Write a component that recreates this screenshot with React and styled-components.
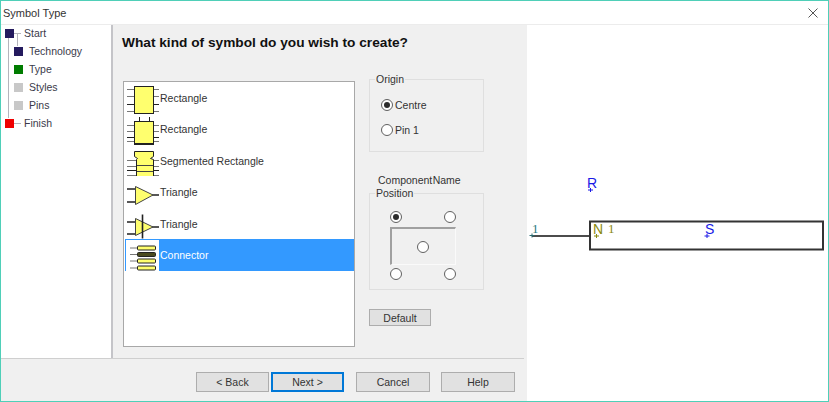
import React from "react";
import styled, { createGlobalStyle } from "styled-components";

const GlobalStyle = createGlobalStyle`
html, body {
  margin: 0;
  padding: 0;
  background: #fff;
}
`;

const Window = styled.div`
width: 829px;
height: 402px;
box-sizing: border-box;
border: 1px solid #4fcfb8;
display: flex;
flex-direction: column;
overflow: hidden;
background: #fff;
font-family: "Liberation Sans", Arial, sans-serif;
font-size: 11px;
color: #222;
`;

const TitleBar = styled.div`
height: 23px;
flex: none;
display: flex;
align-items: center;
justify-content: space-between;
padding: 0 10px 0 2px;
border-bottom: 1px solid #ececec;
font-size: 11px;
color: #333;
`;

const Body = styled.div`
flex: 1;
display: flex;
min-height: 0;
`;

const Wizard = styled.div`
width: 526px;
flex: none;
display: flex;
flex-direction: column;
background: #f0f0f0;
`;

const WizardMain = styled.div`
flex: 1;
display: flex;
min-height: 0;
`;

const StepList = styled.div`
width: 110px;
flex: none;
position: relative;
background: #fff;
border-right: 2px solid #c4c4c8;
`;

const StepTrack = styled.div`
margin-top: -1px;
`;

const StepRail = styled.div`
position: absolute;
left: 7px;
top: 13px;
height: 80px;
border-left: 1px solid #b4b4bc;
`;

const StepBranch = styled.div`
position: absolute;
left: 16px;
top: 8px;
height: 13px;
border-left: 1px solid #b4b4bc;
`;

const Step = styled.div`
height: 18px;
display: flex;
align-items: center;
gap: 5px;
padding-left: ${(p) => (p.$nested ? "13px" : "4px")};
position: relative;
color: #3a3a4a;
font-size: 10.5px;
${(p) =>
  !p.$nested &&
  `&::after {
    content: "";
    position: absolute;
    left: 13px;
    top: 9px;
    width: 7px;
    border-top: 1px solid #b4b4bc;
  }`}
`;

const StepMark = styled.span`
width: 9px;
height: 9px;
flex: none;
background: ${(p) => p.$color};
margin-right: ${(p) => (p.$nested ? "1px" : "5px")};
position: relative;
z-index: 1;
`;

const Content = styled.div`
flex: 1;
padding: 9px 0 0 10px;
display: flex;
flex-direction: column;
min-width: 0;
`;

const Heading = styled.h1`
margin: 0 0 30px -1px;
font-size: 13.7px;
line-height: 17px;
font-weight: bold;
color: #111;
`;

const Columns = styled.div`
display: flex;
gap: 14px;
`;

const SymbolList = styled.div`
width: 232px;
height: 266px;
box-sizing: border-box;
border: 1px solid #a8a8a8;
background: #fff;
padding: 0.3px 0 0 1px;
`;

const SymbolRow = styled.div`
height: 31.4px;
display: flex;
align-items: center;
background: ${(p) => (p.$selected ? "#3399ff" : "transparent")};
color: ${(p) => (p.$selected ? "#fff" : "#333")};
font-size: 10.5px;
`;

const SymbolIcon = styled.span`
width: 34px;
height: 100%;
margin-right: 1px;
flex: none;
display: block;
background: #fff;
box-shadow: ${(p) => (p.$selected ? "inset 1px 1px 0 #3399ff" : "none")};
`;

const Options = styled.div`
width: 115px;
display: flex;
flex-direction: column;
margin-top: -2px;
`;

const GroupBox = styled.div`
box-sizing: border-box;
border: 1px solid #dfdfdf;
position: relative;
height: ${(p) => p.$height}px;
margin-top: ${(p) => p.$top || 0}px;
`;

const GroupTitle = styled.span`
position: absolute;
left: 5px;
top: -7px;
background: #f0f0f0;
padding: 0 1px;
font-size: 10.5px;
line-height: 12px;
color: #333;
`;

const OriginOptions = styled.div`
display: flex;
flex-direction: column;
gap: 13px;
padding: 19px 0 0 11px;
`;

const RadioRow = styled.label`
display: flex;
align-items: center;
gap: 2px;
height: 12px;
font-size: 10.5px;
color: #333;
`;

const Radio = styled.span`
width: 12px;
height: 12px;
box-sizing: border-box;
flex: none;
display: flex;
align-items: center;
justify-content: center;
border: 1px solid #606060;
border-radius: 50%;
background: #fff;
&::after {
  content: "";
  width: 6px;
  height: 6px;
  border-radius: 50%;
  background: ${(p) => (p.$checked ? "#2c2c2c" : "transparent")};
}
`;

const NameCaption = styled.div`
margin: 22px 0 0 9px;
height: 12px;
line-height: 12px;
font-size: 10.5px;
word-spacing: -2.5px;
color: #333;
`;

const PositionGrid = styled.div`
display: grid;
grid-template-columns: repeat(3, 27px);
grid-template-rows: 24px 36px 18px;
margin: 11px 0 0 12px;
justify-items: center;
align-items: center;
position: relative;
`;

// the small frame the five name positions sit around
const PositionBox = styled.div`
position: absolute;
left: 20px;
top: 33px;
width: 66px;
height: 38px;
box-sizing: border-box;
border-style: solid;
border-width: 2px 1px 1px 2px;
border-color: #a0a0a0 #fafafa #fafafa #a0a0a0;
`;

const PositionCell = styled.span`
grid-column: ${(p) => p.$col};
grid-row: ${(p) => p.$row};
display: flex;
`;

const WizardButton = styled.button`
width: ${(p) => p.$width || 74}px;
height: 20px;
padding: 0;
margin-right: ${(p) => p.$after || 0}px;
box-sizing: border-box;
background: #e1e1e1;
border: ${(p) => (p.$primary ? "2px solid #0078d7" : "1px solid #adadad")};
font-family: inherit;
font-size: 10.5px;
color: #333;
`;

const DefaultButton = styled(WizardButton)`
width: 62px;
height: 17px;
margin-top: 19px;
`;

const Footer = styled.div`
height: 43px;
flex: none;
margin-right: 3px;
border-top: 1px solid #cfcfcf;
display: flex;
justify-content: flex-end;
align-items: flex-start;
padding: 13px 9px 0 0;
box-sizing: border-box;
`;

const Canvas = styled.div`
flex: 1;
position: relative;
background: #fff;
`;

const CanvasDrawing = styled.svg`
position: absolute;
left: 0;
top: 0;
`;

const PinLabel = styled.span`
position: absolute;
left: ${(p) => p.$x}px;
top: ${(p) => p.$y}px;
font-family: ${(p) => (p.$serif ? '"Liberation Serif", serif' : '"Liberation Sans", Arial, sans-serif')};
font-size: ${(p) => p.$size || 14}px;
line-height: 14px;
color: ${(p) => p.$color};
`;

const CHIP_YELLOW = "#ffff6e";

// lead lines either side of a chip body
const Leads = ({ rows, x1 = 2, x2 = 34 }) =>
  rows.map((y, i) => (
    <line key={i} x1={x1} y1={y} x2={x2} y2={y} stroke={i === 2 ? "#222" : "#777"} strokeWidth="1" />
  ));

const RectIcon = () => (
  <svg width="34" height="32" viewBox="0 0 34 32">
    <Leads rows={[7.5, 14.5, 22.5, 29.5]} />
    <rect x="9.5" y="4.5" width="19" height="27" fill={CHIP_YELLOW} stroke="#222" />
  </svg>
);

const PinnedRectIcon = () => (
  <svg width="34" height="32" viewBox="0 0 34 32">
    <path d="M14.500 3v5M24.500 3v5" stroke="#222" />
    <Leads rows={[11.5, 17.5, 23.5, 27.5]} />
    <rect x="9.5" y="7.5" width="19" height="22" fill={CHIP_YELLOW} stroke="#222" />
    <path d="M9 30.500h20" stroke="#222" strokeWidth="1.500" />
  </svg>
);

const SegmentIcon = () => (
  <svg width="34" height="32" viewBox="0 0 34 32">
    <Leads rows={[15.5, 21.5, 25.5, 30.5]} />
    <path d="M9.500 6.500h19v5l-3 2 3 1v17.500h-17v-17.500l1-1-3-2z" fill={CHIP_YELLOW} stroke="#222" />
    <path d="M12 20.500h16M12 26.500h16" stroke="#444" />
  </svg>
);

const TriangleIcon = () => (
  <svg width="34" height="32" viewBox="0 0 34 32">
    <path d="M2 13h8M2 26h8M27 19h7" stroke="#222" strokeWidth="1.600" />
    <path d="M10.500 10.500v18l17.500-9.500z" fill={CHIP_YELLOW} stroke="#444" />
  </svg>
);

const GatedTriangleIcon = () => (
  <svg width="34" height="32" viewBox="0 0 34 32">
    <path d="M2 14h8M2 26h8M27 19h7" stroke="#222" strokeWidth="1.600" />
    <path d="M10.500 10.500v17l17.500-8.500z" fill={CHIP_YELLOW} stroke="#444" />
    <path d="M17.500 6.500v24" stroke="#222" strokeWidth="1.600" />
  </svg>
);

const ConnectorIcon = () => (
  <svg width="34" height="32" viewBox="0 0 34 32">
    <path d="M5 9h7M5 15.500h7M5 22h7M5 29h7" stroke="#777" />
    {[9, 15.5, 22, 29].map((y, i) => (
      <rect key={y} x="12.5" y={y - 2} width="18" height="4" rx="1" fill={i === 1 ? "#4a4a20" : CHIP_YELLOW} stroke="#222" />
    ))}
  </svg>
);

// crosshair the editor draws at each text anchor
const Anchor = ({ x, y, color }) => (
  <path d={`M${x - 2.5} ${y}h5M${x} ${y - 2}v4`} stroke={color} fill="none" />
);

const steps = [
  { label: "Start", color: "#241a5e" },
  { label: "Technology", color: "#241a5e", nested: true },
  { label: "Type", color: "#007c00", nested: true },
  { label: "Styles", color: "#c8c8c8", nested: true },
  { label: "Pins", color: "#c8c8c8", nested: true },
  { label: "Finish", color: "#f00000" },
];

const symbols = [
  { label: "Rectangle", icon: <RectIcon /> },
  { label: "Rectangle", icon: <PinnedRectIcon /> },
  { label: "Segmented Rectangle", icon: <SegmentIcon /> },
  { label: "Triangle", icon: <TriangleIcon /> },
  { label: "Triangle", icon: <GatedTriangleIcon /> },
  { label: "Connector", icon: <ConnectorIcon />, selected: true },
];

const App = () => {
  return (
    <>
      <GlobalStyle />
      <Window>
        <TitleBar>
          <span>Symbol Type</span>
          <svg width="10" height="10" viewBox="0 0 10 10">
            <path d="M0.500 0.500l9 9M9.500 0.500l-9 9" stroke="#555" strokeWidth="1" />
          </svg>
        </TitleBar>
        <Body>
          <Wizard>
            <WizardMain>
              <StepList>
                <StepRail />
                <StepBranch />
                <StepTrack>
                  {steps.map((s) => (
                    <Step key={s.label} $nested={s.nested}>
                      <StepMark $color={s.color} $nested={s.nested} />
                      {s.label}
                    </Step>
                  ))}
                </StepTrack>
              </StepList>
              <Content>
                <Heading>What kind of symbol do you wish to create?</Heading>
                <Columns>
                  <SymbolList>
                    {symbols.map((s, i) => (
                      <SymbolRow key={i} $selected={s.selected}>
                        <SymbolIcon $selected={s.selected}>{s.icon}</SymbolIcon>
                        {s.label}
                      </SymbolRow>
                    ))}
                  </SymbolList>
                  <Options>
                    <GroupBox $height={73}>
                      <GroupTitle>Origin</GroupTitle>
                      <OriginOptions>
                        <RadioRow>
                          <Radio $checked />
                          Centre
                        </RadioRow>
                        <RadioRow>
                          <Radio />
                          Pin 1
                        </RadioRow>
                      </OriginOptions>
                    </GroupBox>
                    <NameCaption>Component Name</NameCaption>
                    <GroupBox $height={97} $top={7}>
                      <GroupTitle>Position</GroupTitle>
                      <PositionBox />
                      <PositionGrid>
                        <PositionCell $col={1} $row={1}><Radio $checked /></PositionCell>
                        <PositionCell $col={3} $row={1}><Radio /></PositionCell>
                        <PositionCell $col={2} $row={2}><Radio /></PositionCell>
                        <PositionCell $col={1} $row={3}><Radio /></PositionCell>
                        <PositionCell $col={3} $row={3}><Radio /></PositionCell>
                      </PositionGrid>
                    </GroupBox>
                    <DefaultButton>Default</DefaultButton>
                  </Options>
                </Columns>
              </Content>
            </WizardMain>
            <Footer>
              <WizardButton $width={73} $after={2}>&lt; Back</WizardButton>
              <WizardButton $width={73} $primary $after={12}>Next &gt;</WizardButton>
              <WizardButton $after={11}>Cancel</WizardButton>
              <WizardButton>Help</WizardButton>
            </Footer>
          </Wizard>
          <Canvas>
            <CanvasDrawing width="301" height="376" viewBox="527 25 301 376">
              <path d="M532 236h58" stroke="#111" strokeWidth="1.500" />
              <rect x="590" y="221.500" width="233" height="28" fill="#fff" stroke="#333" strokeWidth="2" />
              <Anchor x={590.5} y={190} color="#1a1ae6" />
              <Anchor x={532} y={235.5} color="#2a6a70" />
              <Anchor x={596.5} y={236} color="#8a8a10" />
              <Anchor x={707} y={236} color="#1a1ae6" />
            </CanvasDrawing>
            <PinLabel $x={60} $y={151} $color="#1a1ae6">R</PinLabel>
            <PinLabel $x={5} $y={197} $color="#2a7a80" $size={13} $serif>1</PinLabel>
            <PinLabel $x={66} $y={197} $color="#8a8a10">N</PinLabel>
            <PinLabel $x={81} $y={197} $color="#8a8a10" $size={13} $serif>1</PinLabel>
            <PinLabel $x={178} $y={197} $color="#1a1ae6">S</PinLabel>
          </Canvas>
        </Body>
      </Window>
    </>
  );
};

export default App;
